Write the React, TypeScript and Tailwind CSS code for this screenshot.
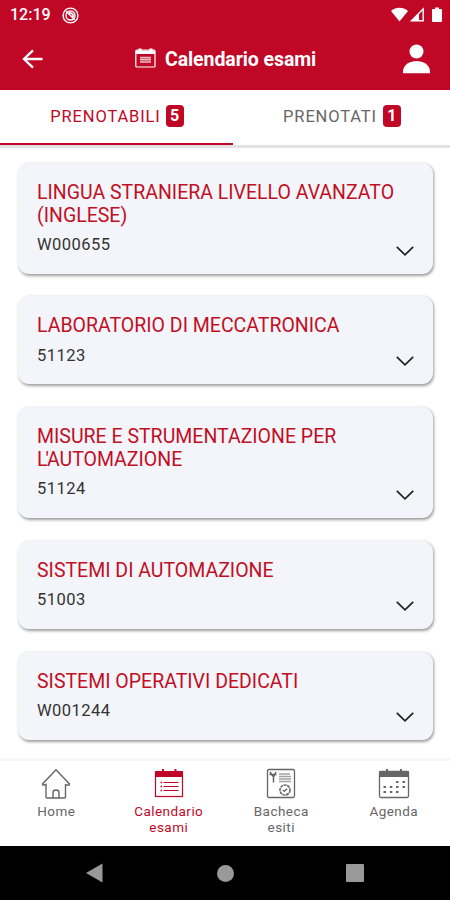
import type { ReactNode } from "react";

const exams = [
  { title: "LINGUA STRANIERA LIVELLO AVANZATO (INGLESE)", code: "W000655" },
  { title: "LABORATORIO DI MECCATRONICA", code: "51123" },
  {
    title: (
      <>
        MISURE E STRUMENTAZIONE PER <span className="tracking-[-2px]">L'</span>AUTOMAZIONE
      </>
    ),
    code: "51124",
  },
  { title: "SISTEMI DI AUTOMAZIONE", code: "51003" },
  { title: "SISTEMI OPERATIVI DEDICATI", code: "W001244" },
];

const StatusBar = () => (
  <div className="flex h-[30px] items-center pl-[10px] pr-[8px]">
    <span className="text-[16px] font-medium leading-none">12:19</span>
    <svg className="ml-[11px] h-[17px] w-[17px]" viewBox="0 0 17 17" fill="none" stroke="currentColor">
      <circle cx="8.5" cy="8.5" r="7.4" strokeWidth="1.4" />
      <circle cx="8.5" cy="8.5" r="4.5" strokeWidth="1.4" />
      <path d="M4.2 4.2l8.6 8.6M7 5.8c3 0 4.4 1.4 4.2 4.2" strokeWidth="1.6" />
    </svg>
    <div className="ml-auto flex items-center">
      <svg className="h-[16px] w-[17px]" viewBox="0 0 17 16" fill="currentColor">
        <path d="M0 4C5-.3 12-.3 17 4L8.5 14.5z" />
      </svg>
      <svg className="ml-[2px] h-[16px] w-[15px]" viewBox="0 0 15 16" fill="none" stroke="currentColor">
        <path d="M1.5 13.8L13.2 2v11.8z" strokeWidth="1.4" />
        <path d="M9 6.5V14H2z" fill="currentColor" stroke="none" />
      </svg>
      <svg className="ml-[7px] h-[16px] w-[10px]" viewBox="0 0 10 16" fill="currentColor">
        <path d="M3 .5h4V2h2q1 0 1 1v11q0 1-1 1H1q-1 0-1-1V3q0-1 1-1h2z" />
      </svg>
    </div>
  </div>
);

const Header = () => (
  <header className="h-[90px] bg-[#c10726] text-white">
    <StatusBar />
    <div className="flex h-[58px] items-center pl-[22px] pr-[20px]">
      <svg className="h-[20px] w-[21px]" viewBox="0 0 21 20" fill="none" stroke="currentColor" strokeWidth="2.3">
        <path d="M20.5 10H2M11 1.3L2 10l9 8.7" />
      </svg>
      <div className="ml-[92px] flex items-center">
        <svg className="mt-[-3px] h-[20px] w-[21px]" viewBox="0 0 21 20" fill="none" stroke="currentColor">
          <rect x=".8" y="2.2" width="19.2" height="16.8" rx="1" strokeWidth="1.2" />
          <path d="M.8 4.5H20M5 .5v3M16 .5v3" strokeWidth="3" />
          <path d="M5 9.6h11M5 11.8h11M5 14h11" strokeWidth="1.6" opacity=".75" />
        </svg>
        <h1 className="ml-[9px] mt-px text-[19.5px] font-bold tracking-[-0.08px]">Calendario esami</h1>
      </div>
      <svg className="ml-auto h-[30px] w-[27px]" viewBox="0 0 27 30" fill="currentColor">
        <circle cx="13.5" cy="7.5" r="7" />
        <path d="M0 29.3V27C1 13.5 26 13.5 27 27v2.3z" />
      </svg>
    </div>
  </header>
);

const Badge = ({ count }: { count: number }) => (
  <span className="mb-px flex h-[22px] w-[18px] items-center justify-center rounded-[4px] bg-[#c10726] text-[16px] font-bold tracking-normal text-white">
    {count}
  </span>
);

const Tabs = () => (
  <div className="flex h-[58px] border-b-[3px] border-[#e2e2e2] text-[16.5px] tracking-[0.85px]">
    <button className="flex w-[233px] items-center justify-center gap-[5px] border-b-[2px] border-[#c10726] pl-px text-[#c10726]">
      <span className="mt-[2px] font-[370]">PRENOTABILI</span>
      <Badge count={5} />
    </button>
    <button className="flex flex-1 items-center justify-center gap-[6px] pb-[2px] pl-px text-[#666]">
      <span className="mt-[2px] font-[370]">PRENOTATI</span>
      <Badge count={1} />
    </button>
  </div>
);

const ExamCard = ({ title, code }: { title: ReactNode; code: string }) => (
  <div className="flex justify-between rounded-[11px] bg-[#f3f5fa] px-[19px] pb-[18px] pt-[19px] shadow-[1px_1.5px_3px_rgba(0,0,0,0.38)]">
    <div className="w-[365px]">
      <h2 className="text-[19.5px] leading-[22.5px] text-[#c10f24]">{title}</h2>
      <p className="mt-[8px] text-[16.5px] leading-[20.5px] tracking-[0.45px] text-[#333]">{code}</p>
    </div>
    <svg
      className="h-[10px] w-[18px] shrink-0 self-end"
      viewBox="0 0 18 10"
      fill="none"
      stroke="#222"
      strokeWidth="1.7"
    >
      <path d="M.8 .8L9 8.8l8.2-8" />
    </svg>
  </div>
);

const HomeIcon = () => (
  <svg className="h-[32px] w-[30px]" viewBox="0 0 30 32" fill="none" stroke="currentColor" strokeWidth="1.4">
    <path d="M5 16.5L2 17.2 1.5 16 15 1.8 28.5 16l-.5 1.2-3.5-.5V29q0 1-1 1H6q-1 0-1-1z" />
    <path d="M12 30v-5.5q0-2.5 3-2.5t3 2.5V30" />
  </svg>
);

const ExamsIcon = () => (
  <svg className="h-[32px] w-[30px]" viewBox="0 0 30 32" fill="none" stroke="currentColor">
    <rect x="1.5" y="4" width="27" height="24.5" strokeWidth="1.2" />
    <path d="M1 3h28v6H1zM8 1h2v3H8zM20.5 1h2v3h-2z" fill="currentColor" stroke="none" />
    <path d="M9.5 14.5h15M9.5 18.5h15M9.5 22.5h15" strokeWidth="1.2" />
    <path d="M6.5 14.5H8M6.5 18.5H8M6.5 22.5H8" strokeWidth="1.5" />
  </svg>
);

const ResultsIcon = () => (
  <svg className="h-[32px] w-[30px]" viewBox="0 0 30 32" fill="none" stroke="currentColor">
    <rect x="1.5" y="1.5" width="27" height="28" rx="1.5" strokeWidth="1.3" />
    <path d="M4 4l3.5 5L10 4M3.5 6.5h7M7.5 7v7.5" strokeWidth="1.5" />
    <path d="M13 6h11M13 8.5h12M13 11h12M13 13.5h12" strokeWidth="1.3" opacity=".6" />
    <circle cx="19" cy="22" r="5" strokeWidth="1.6" strokeDasharray="3 .6" />
    <path d="M16.8 22l1.5 1.3 2.7-2.5" strokeWidth="1.3" />
  </svg>
);

const AgendaIcon = () => (
  <svg className="h-[32px] w-[32px]" viewBox="0 0 32 32" fill="none" stroke="currentColor">
    <rect x="1.5" y="3.5" width="29" height="26" rx="1.5" strokeWidth="1.3" />
    <path d="M1 3h30v6H1zM8 1h2v3H8zM22 1h2v3h-2z" fill="currentColor" stroke="none" />
    <path
      d="M18 14h2.500m4 0h2.500M5.500 19h2.500m3.800 0h2.500m3.700 0h2.500m4 0h2.500M5.500 24h2.500m3.800 0h2.500m3.700 0h2.500"
      strokeWidth="2.2"
    />
  </svg>
);

const navItems = [
  { label: "Home", icon: <HomeIcon />, active: false },
  { label: "Calendario esami", icon: <ExamsIcon />, active: true },
  { label: "Bacheca esiti", icon: <ResultsIcon />, active: false },
  { label: "Agenda", icon: <AgendaIcon />, active: false },
];

const BottomNav = () => (
  <nav className="grid h-[88px] grid-cols-4 border-t-[3px] border-[#f7f7f7] bg-white">
    {navItems.map(({ label, icon, active }) => (
      <div
        key={label}
        className={`flex flex-col items-center pt-[7px] ${active ? "text-[#c10726]" : "text-[#666]"}`}
      >
        {icon}
        <span className="mt-[3px] w-[80px] text-center text-[13.5px] leading-[16px] tracking-[0.45px]">
          {label}
        </span>
      </div>
    ))}
  </nav>
);

const SystemBar = () => (
  <div className="flex h-[54px] items-center bg-black pl-[86px] text-[#999]">
    <svg className="h-[20px] w-[17px]" viewBox="0 0 17 20" fill="currentColor">
      <path d="M0 10L16.5 .5v19z" />
    </svg>
    <div className="ml-[114px] h-[17px] w-[17px] rounded-full bg-[#999]" />
    <div className="ml-[112px] h-[18px] w-[18px] rounded-[1px] bg-[#999]" />
  </div>
);

const App = () => (
  <div className="flex h-[900px] w-[450px] flex-col overflow-hidden bg-white font-['Roboto',sans-serif]">
    <Header />
    <Tabs />
    <main className="flex flex-1 flex-col gap-[22.9px] pl-[18px] pr-[17px] pt-[15.1px]">
      {exams.map((exam) => (
        <ExamCard key={exam.code} title={exam.title} code={exam.code} />
      ))}
    </main>
    <BottomNav />
    <SystemBar />
  </div>
);

export default App;
